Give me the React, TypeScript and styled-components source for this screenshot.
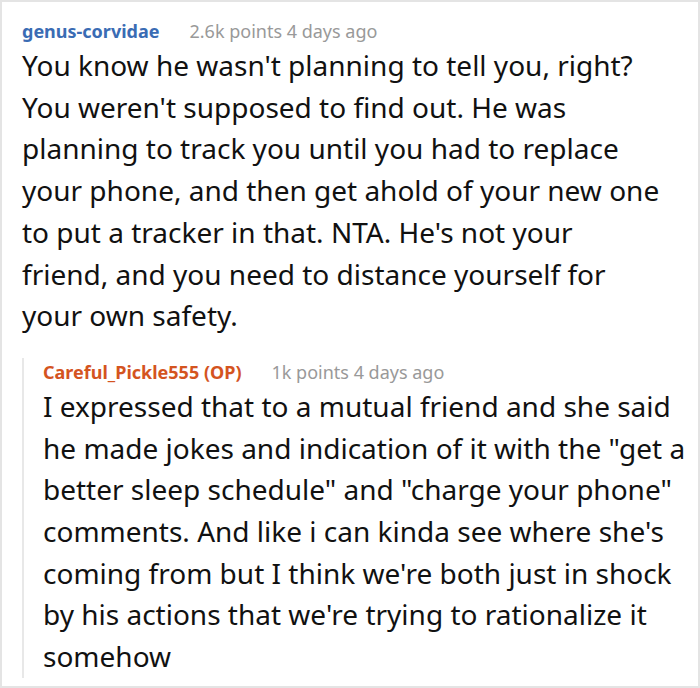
import React from "react";
import styled, { createGlobalStyle } from "styled-components";

const GlobalStyle = createGlobalStyle`
    html, body {
        margin: 0;
        padding: 0;
        background: #ffffff;
    }
`;

const Frame = styled.div`
    box-sizing: border-box;
    width: 700px;
    height: 688px;
    border: 2px solid #e4e4e4;
    background: #ffffff;
    padding: 15px 8px 0 20px;
    overflow: hidden;
    font-family: "Noto Sans", "Open Sans", sans-serif;
`;

const Comment = styled.div<{ $nested?: boolean }>`
    display: flex;
    flex-direction: column;
    ${props => props.$nested && `
        margin-top: 21px;
        border-left: 2px solid #e8e8e8;
        padding-left: 19px;
    `}
`;

const Header = styled.div`
    display: flex;
    align-items: baseline;
    gap: 30px;
    height: 28px;
    line-height: 28px;
    font-size: 18px;
`;

const Author = styled.span<{ $color: string }>`
    color: ${props => props.$color};
    font-weight: 700;
`;

const Meta = styled.span`
    color: #999999;
`;

const Body = styled.p<{ $inset: number }>`
    margin: 0 ${props => props.$inset}px 0 0;
    font-size: 28px;
    line-height: 41.7px;
    color: #111111;
    white-space: pre-line;
`;

type CommentData = {
    author: string;
    color: string;
    meta: string;
    text: string;
    inset: number;
};

const top: CommentData = {
    author: "genus-corvidae",
    color: "#3a6cb4",
    meta: "2.6k points 4 days ago",
    text: "You know he wasn't planning to tell you, right? You weren't supposed to find out. He was planning to track you until you had to replace your phone, and then get ahold of your new one to put a tracker in that. NTA. He's not your\nfriend, and you need to distance yourself for your own safety.",
    inset: 26,
};

const reply: CommentData = {
    author: "Careful_Pickle555 (OP)",
    color: "#d4541f",
    meta: "1k points 4 days ago",
    text: "I expressed that to a mutual friend and she said he made jokes and indication of it with the \"get a better sleep schedule\" and \"charge your phone\" comments. And like i can kinda see where she's coming from but I think we're both just in shock by his actions that we're trying to rationalize it somehow",
    inset: 0,
};

function CommentView({ data, nested, children }: { data: CommentData; nested?: boolean; children?: React.ReactNode }) {
    return (
        <Comment $nested={nested}>
            <Header>
                <Author $color={data.color}>{data.author}</Author>
                <Meta>{data.meta}</Meta>
            </Header>
            <Body $inset={data.inset}>{data.text}</Body>
            {children}
        </Comment>
    );
}

export default function App() {
    return (
        <>
            <GlobalStyle />
            <Frame>
                <CommentView data={top}>
                    <CommentView data={reply} nested />
                </CommentView>
            </Frame>
        </>
    );
}
